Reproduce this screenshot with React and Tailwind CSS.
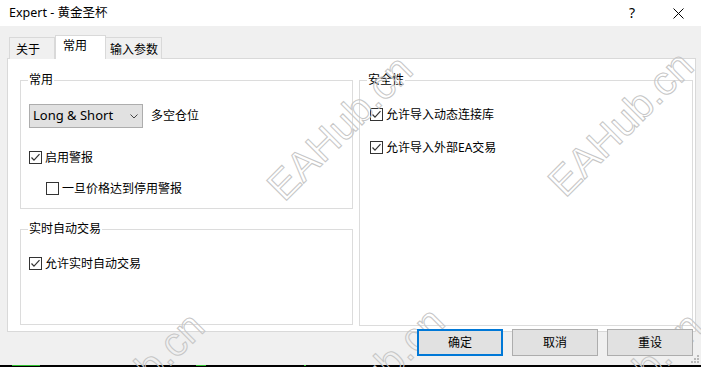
import React from 'react';

const Check = ({ checked }) => (
  <svg width="13" height="13" viewBox="0 0 13 13" className="shrink-0">
    <rect x="0.5" y="0.5" width="12" height="12" fill="#fff" stroke="#333" />
    {checked && <polyline points="2.5,6.5 5,9.2 10.5,3.2" fill="none" stroke="#333" strokeWidth="1.2" />}
  </svg>
);

const CheckRow = ({ checked, label, className = '' }) => (
  <div className={`flex items-center gap-[3px] h-[13px] ${className}`}>
    <Check checked={checked} />
    <span className="leading-none">{label}</span>
  </div>
);

const Group = ({ title, className = '', children }) => (
  <div className={`relative border border-[#dcdcdc] ${className}`}>
    <span className="absolute left-[7px] -top-[9px] bg-white px-[1px] leading-[16px]">{title}</span>
    {children}
  </div>
);

// the site's watermark, drawn over everything
const Watermark = ({ x, y }) => (
  <span
    className="absolute pointer-events-none whitespace-nowrap text-[41px] leading-none font-['Liberation_Sans',Arial,sans-serif] text-transparent [-webkit-text-stroke:1px_#c6c6c6] -translate-x-1/2 -translate-y-1/2 -rotate-[45deg]"
    style={{ left: x, top: y }}
  >
    EAHub.cn
  </span>
);

const Button = ({ children, primary }) => (
  <button
    className={`w-[86px] h-[27px] bg-[#e1e1e1] text-[12px] ${primary ? 'border-2 border-[#0078d7]' : 'border border-[#adadad]'}`}
  >
    {children}
  </button>
);

export default function App() {
  return (
    <div className="relative w-[701px] h-[367px] overflow-hidden bg-[#f0f0f0] text-[12px] text-black font-['Noto_Sans','Noto_Sans_CJK_SC',sans-serif] flex flex-col">
      {/* title bar */}
      <div className="h-[26px] bg-white flex items-center pl-[9px] shrink-0">
        <span className="flex-1 text-[12.5px]">Expert - 黄金圣杯</span>
        <span className="w-[46px] text-center text-[14px] leading-none">?</span>
        <span className="w-[46px] flex justify-center">
          <svg width="11" height="11" viewBox="0 0 11 11">
            <path d="M0.5 0.5 L10.5 10.5 M10.5 0.5 L0.5 10.5" stroke="#000" strokeWidth="1" />
          </svg>
        </span>
      </div>

      {/* tabs */}
      <div className="flex items-end pl-[9px] pt-[9px] h-[33px] shrink-0 relative z-10">
        <div className="h-[22px] w-[46px] border border-[#d9d9d9] border-b-0 bg-[#f0f0f0] pl-[6px] flex items-center pt-[2px]">关于</div>
        <div className="h-[24px] w-[51px] border border-[#d9d9d9] border-b-0 bg-white pl-[7px] pb-[3px] flex items-center">常用</div>
        <div className="h-[22px] w-[56px] border border-[#d9d9d9] border-b-0 border-l-0 bg-[#f0f0f0] pl-[4px] flex items-center pt-[2px]">输入参数</div>
      </div>

      {/* tab page */}
      <div className="ml-[7px] -mt-[1px] w-[689px] h-[274px] shrink-0 bg-white border border-[#d9d9d9] flex gap-[6px] pl-[12px] pt-[21px]">
        <div className="w-[333px] flex flex-col gap-[20px]">
          <Group title="常用" className="h-[129px] pl-[8px] pt-[23px]">
            <div className="flex items-center gap-[8px]">
              <div className="w-[114px] h-[24px] bg-[#e1e1e1] border border-[#adadad] flex items-center pl-[3px] pr-[4px] text-[13px]">
                <span className="flex-1">Long &amp; Short</span>
                <svg width="8" height="5" viewBox="0 0 8 5">
                  <polyline points="0.5,0.5 4,4 7.5,0.5" fill="none" stroke="#444" strokeWidth="1" />
                </svg>
              </div>
              <span>多空仓位</span>
            </div>
            <CheckRow checked label="启用警报" className="mt-[23px]" />
            <CheckRow label="一旦价格达到停用警报" className="mt-[18px] ml-[17px]" />
          </Group>
          <Group title="实时自动交易" className="h-[96px] pl-[8px] pt-[27px]">
            <CheckRow checked label="允许实时自动交易" />
          </Group>
        </div>
        <Group title="安全性" className="w-[334px] h-[246px] pl-[10px] pt-[27px]">
          <CheckRow checked label="允许导入动态连接库" />
          <CheckRow checked label="允许导入外部EA交易" className="mt-[20px]" />
        </Group>
      </div>

      {/* buttons */}
      <div className="flex justify-end gap-[9px] pr-[8px] -mt-[3px] relative z-10 shrink-0">
        <Button primary>确定</Button>
        <Button>取消</Button>
        <Button>重设</Button>
      </div>

      <div className="flex-1" />
      <div className="h-[2px] bg-black shrink-0 relative">
        <span className="absolute left-[12px] top-0 w-[28px] h-[1px] bg-[#2fbf2f]" />
        <span className="absolute left-[196px] top-0 w-[10px] h-[1px] bg-[#2fbf2f]" />
        <span className="absolute left-[304px] top-0 w-[2px] h-[1px] bg-[#2fbf2f]" />
      </div>

      {/* size grip */}
      <svg width="8" height="8" viewBox="0 0 8 8" className="absolute right-[2px] bottom-[4px]">
        <rect x="6" y="0" width="2" height="2" fill="#b8b8b8" />
        <rect x="3" y="3" width="2" height="2" fill="#b8b8b8" />
        <rect x="6" y="3" width="2" height="2" fill="#b8b8b8" />
        <rect x="0" y="6" width="2" height="2" fill="#b8b8b8" />
        <rect x="3" y="6" width="2" height="2" fill="#b8b8b8" />
        <rect x="6" y="6" width="2" height="2" fill="#b8b8b8" />
      </svg>

      <Watermark x={340} y={128} />
      <Watermark x={621} y={124} />
      <Watermark x={132} y={385} />
      <Watermark x={372} y={380} />
      <Watermark x={630} y={385} />
    </div>
  );
}
